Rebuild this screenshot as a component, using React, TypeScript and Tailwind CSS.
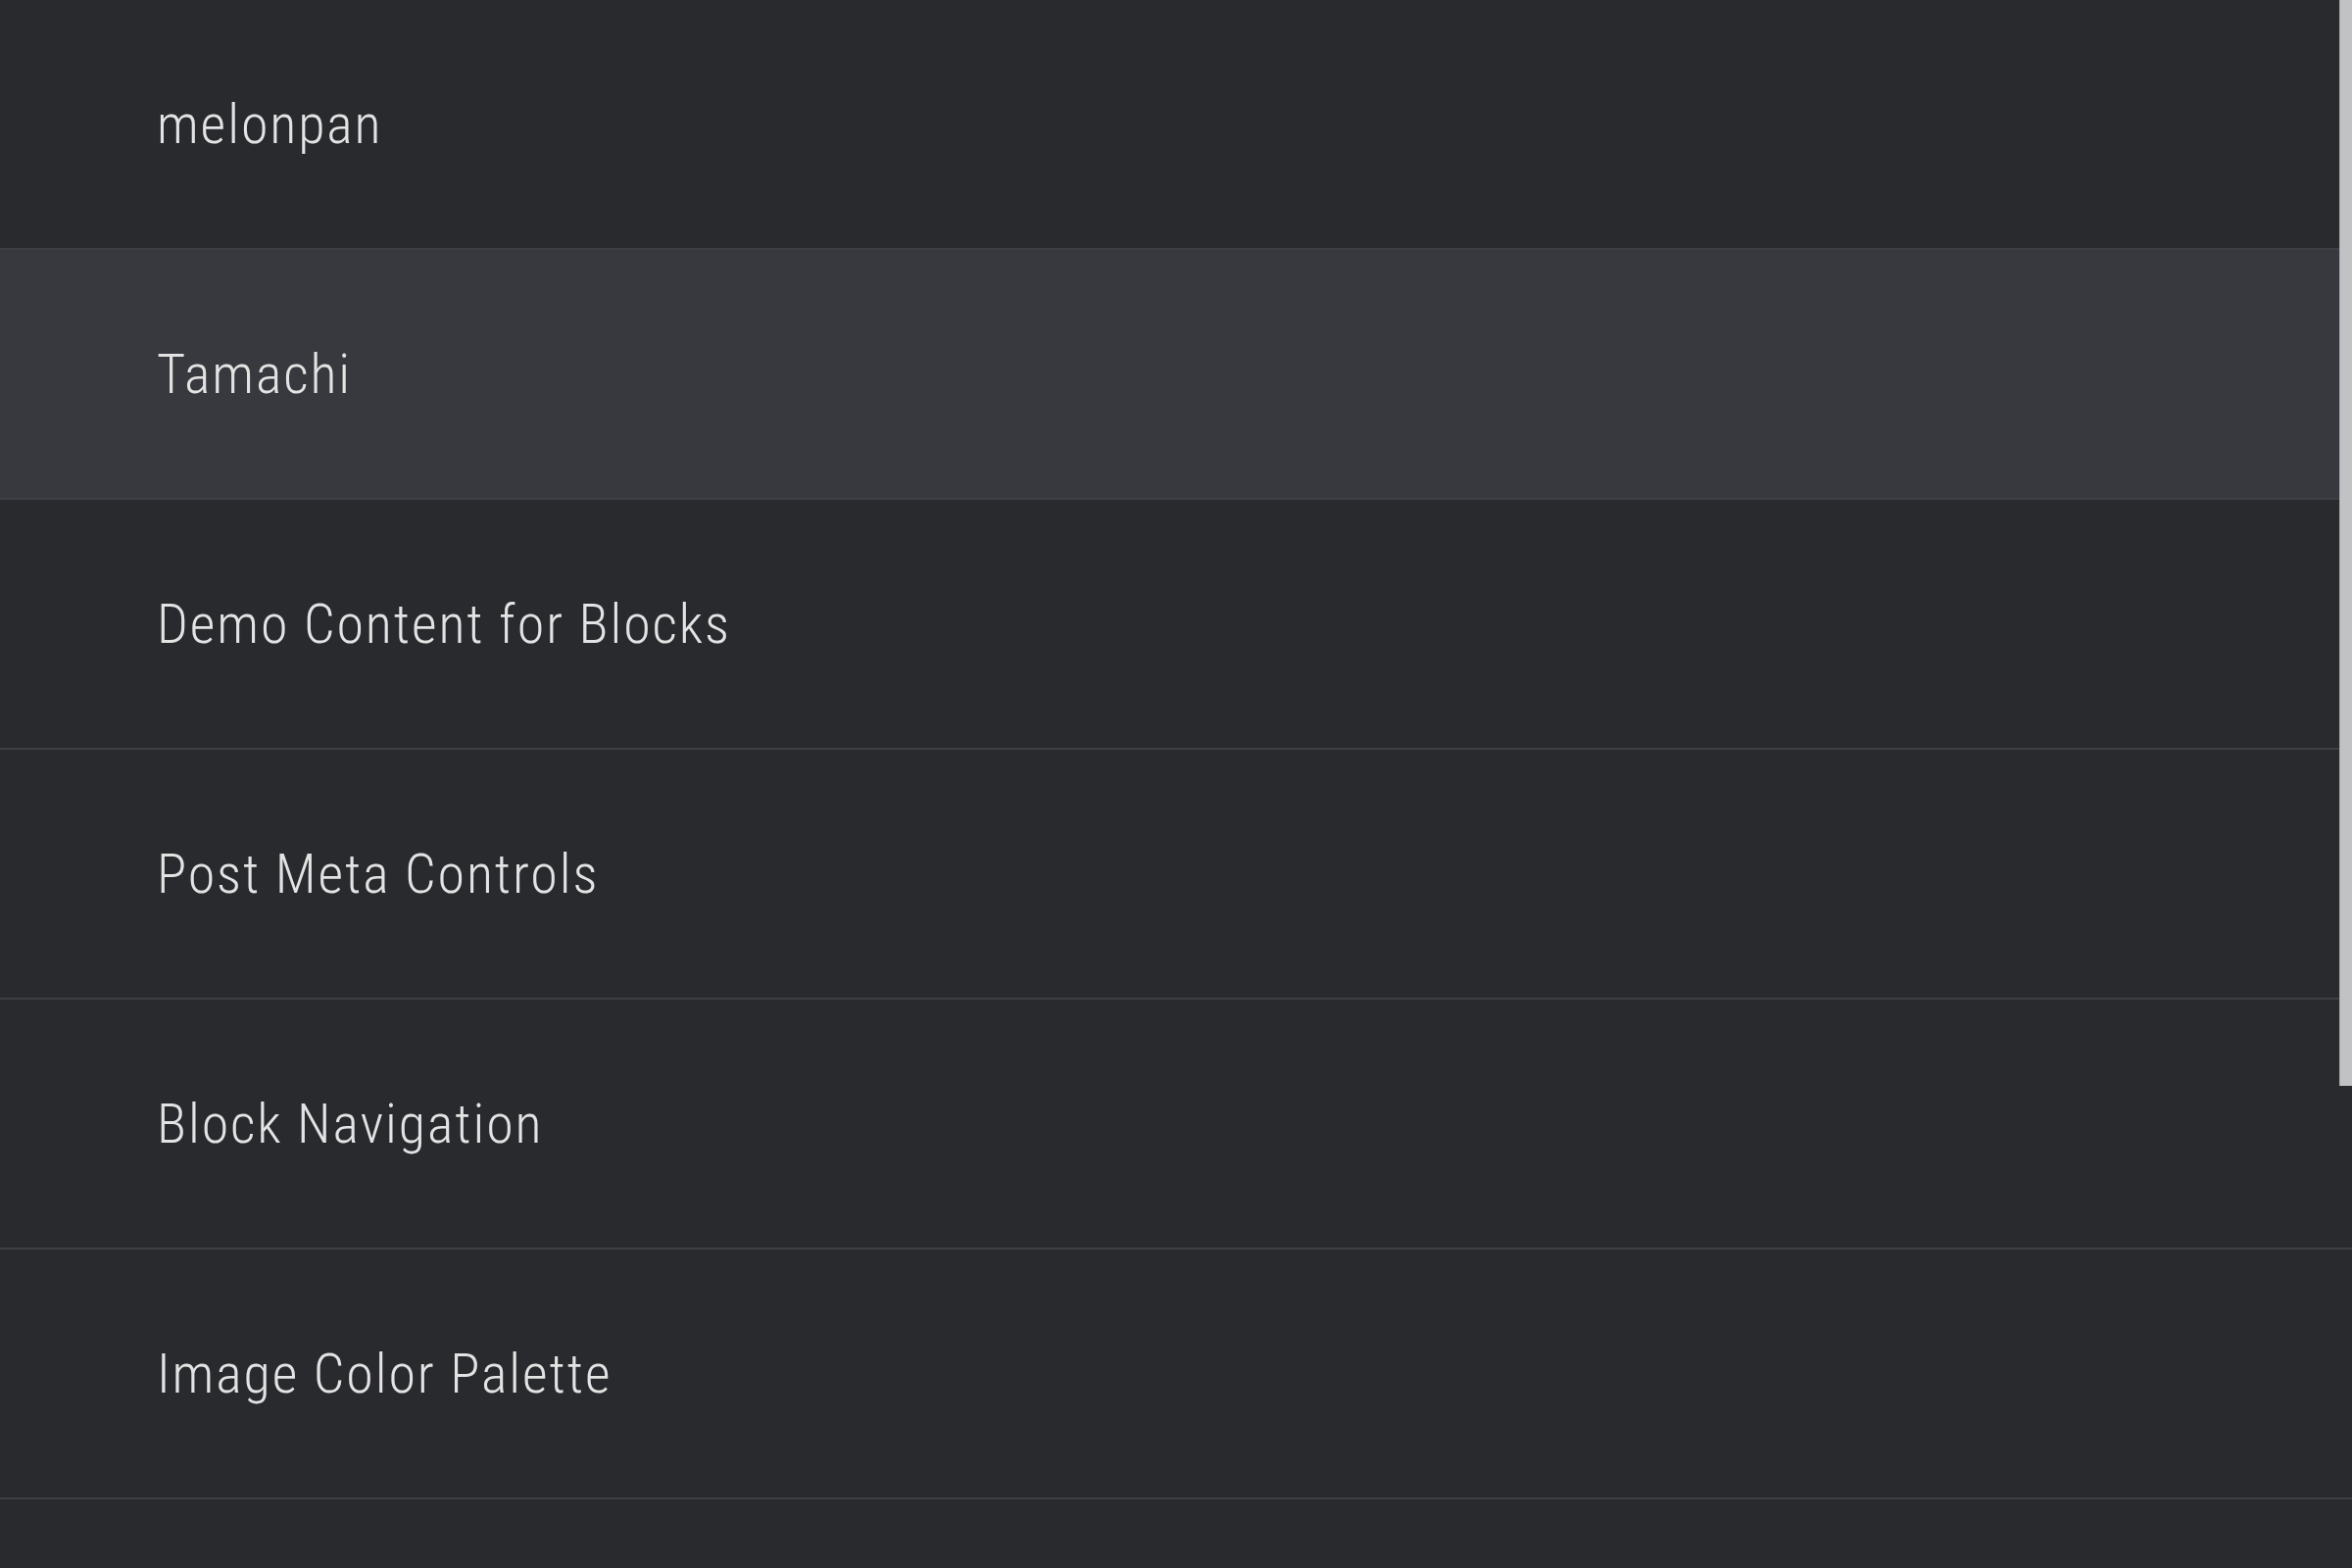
const items = [
  "melonpan",
  "Tamachi",
  "Demo Content for Blocks",
  "Post Meta Controls",
  "Block Navigation",
  "Image Color Palette",
  "",
];

export default function App() {
  return (
    <div className="relative h-[1600px] w-[2400px] overflow-hidden bg-[#292a2e] font-['Roboto',sans-serif]">
      <ul className="flex flex-col">
        {items.map((name, i) => (
          <li
            key={i}
            className={`flex h-[255px] shrink-0 items-center border-b-2 border-[#3e3f44] pl-[160px] ${
              i === 1 ? "bg-[#38393e]" : ""
            }`}
          >
            <span className="text-[56px] font-light tracking-[0.034em] text-[#e3e3e3] font-stretch-condensed">
              {name}
            </span>
          </li>
        ))}
      </ul>
      <div className="absolute right-0 top-0 h-[1108px] w-[13px] border-l border-[#a9aaad] bg-[#c1c2c4]" />
    </div>
  );
}
